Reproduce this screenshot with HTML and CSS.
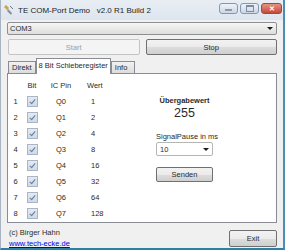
FILE: index.html
```html
<!DOCTYPE html>
<html lang="de">
<head>
    <meta charset="UTF-8">
    <title>TE COM-Port Demo</title>
    <link rel="stylesheet" href="styles.css">
</head>
<body>
<div class="window">
    <div class="titlebar">
        <svg class="app-icon" width="10" height="12" viewBox="0 0 10 12">
            <path d="M2 1 L5 4 L3 6 L0 3 Z" fill="#c9a24a"/>
            <path d="M4 5 L8 9 L7 11 L3 7 Z" fill="#8a8f99"/>
            <path d="M6 2 L9 5" stroke="#6f7785" stroke-width="1"/>
        </svg>
        <span class="title">TE COM-Port Demo   v2.0 R1 Build 2</span>
        <div class="controls">
            <span class="ctl ctl-min"><i></i></span>
            <span class="ctl ctl-max"><i></i></span>
            <span class="ctl ctl-close">&#x2715;</span>
        </div>
    </div>

    <div class="client">
        <div class="combo combo-port">
            <span>COM3</span>
            <span class="arrow"></span>
        </div>

        <div class="btn-row">
            <button class="btn" disabled>Start</button>
            <button class="btn">Stop</button>
        </div>

        <div class="tabs">
            <span class="tab">Direkt</span>
            <span class="tab active">8 Bit Schieberegister</span>
            <span class="tab tab-info">Info</span>
        </div>

        <div class="panel">
            <div class="bits">
                <span></span><span class="hd">Bit</span><span class="hd c">IC Pin</span><span class="hd w">Wert</span>

                <span class="n">1</span><span class="cb"></span><span class="c">Q0</span><span class="v">1</span>
                <span class="n">2</span><span class="cb"></span><span class="c">Q1</span><span class="v">2</span>
                <span class="n">3</span><span class="cb"></span><span class="c">Q2</span><span class="v">4</span>
                <span class="n">4</span><span class="cb"></span><span class="c">Q3</span><span class="v">8</span>
                <span class="n">5</span><span class="cb"></span><span class="c">Q4</span><span class="v">16</span>
                <span class="n">6</span><span class="cb"></span><span class="c">Q5</span><span class="v">32</span>
                <span class="n">7</span><span class="cb"></span><span class="c">Q6</span><span class="v">64</span>
                <span class="n">8</span><span class="cb"></span><span class="c">Q7</span><span class="v">128</span>
            </div>

            <div class="side">
                <div class="label-bold">Übergabewert</div>
                <div class="big">255</div>
                <div class="label">SignalPause in ms</div>
                <div class="combo combo-small">
                    <span>10</span>
                    <span class="arrow"></span>
                </div>
                <button class="btn btn-send">Senden</button>
            </div>
        </div>

        <div class="footer">
            <div class="credits">
                <div>(c) Birger Hahn</div>
                <a href="#">www.tech-ecke.de</a>
            </div>
            <button class="btn btn-exit">Exit</button>
        </div>
    </div>
</div>
</body>
</html>
```

FILE: styles.css
```css
body {
    margin: 0;
    padding: 0;
    font-family: "Liberation Sans", Arial, sans-serif;
    font-size: 7.5px;
    color: #2a2a2a;
}
.window {
    width: 285px;
    height: 250px;
    box-sizing: border-box;
    background-color: #f0f0f0;
    border-left: 1px solid #a9b4c2;
    border-right: 2px solid #4a8db5;
    border-bottom: 2px solid #2f7ea3;
    display: flex;
    flex-direction: column;
}
.titlebar {
    height: 20px;
    flex: none;
    display: flex;
    align-items: center;
    background: linear-gradient(#e9eef4, #dde5ee);
    padding-left: 3px;
}
.app-icon {
    margin-right: 4px;
}
.title {
    font-size: 8px;
    color: #1e1e1e;
    white-space: pre;
}
.controls {
    margin-left: auto;
    display: flex;
    gap: 2px;
    align-self: flex-start;
    margin-top: 3px;
    margin-right: 1px;
}
.ctl {
    width: 19px;
    height: 11px;
    box-sizing: border-box;
    border: 1px solid #8596b0;
    border-radius: 3px;
    background: linear-gradient(#eef3f9, #cbd7e6);
    display: flex;
    align-items: center;
    justify-content: center;
}
.ctl-min i {
    width: 7px;
    height: 2px;
    background: #8c9aae;
    margin-top: 3px;
}
.ctl-max i {
    width: 6px;
    height: 4px;
    border: 1px solid #7d8ca3;
    border-top-width: 2px;
}
.ctl-close {
    width: 21px;
    border-color: #9c4a40;
    background: linear-gradient(#e39384, #c6483a);
    color: #ffffff;
    font-size: 7px;
    font-weight: bold;
}
.client {
    flex: 1;
    display: flex;
    flex-direction: column;
    padding: 2px 6px 0 6px;
}
.combo {
    box-sizing: border-box;
    display: flex;
    align-items: center;
    justify-content: space-between;
    border: 1px solid #8e8f8f;
    border-radius: 2px;
    background: linear-gradient(#f6f6f6, #dedede);
    padding: 0 3px 0 2px;
}
.combo-port {
    height: 13px;
}
.arrow {
    width: 0;
    height: 0;
    border-left: 3px solid transparent;
    border-right: 3px solid transparent;
    border-top: 3px solid #1a1a1a;
}
.btn-row {
    display: flex;
    gap: 6px;
    margin-top: 4px;
    padding-left: 1px;
}
.btn {
    font-family: "Liberation Sans", Arial, sans-serif;
    font-size: 7.5px;
    color: #2a2a2a;
    height: 16px;
    padding: 0;
    border: 1px solid #707070;
    border-radius: 2px;
    background: linear-gradient(#f2f2f2 0%, #ebebeb 50%, #dddddd 51%, #cfcfcf 100%);
}
.btn-row .btn {
    flex: 1;
}
.btn:disabled {
    color: #a0a0a0;
    border-color: #c4c4c4;
    background: #f4f4f4;
}
.tabs {
    display: flex;
    align-items: flex-end;
    margin-top: 3px;
    height: 15px;
    padding-left: 1px;
    position: relative;
    z-index: 1;
}
.tab {
    height: 11px;
    line-height: 11px;
    padding: 0 3px;
    border: 1px solid #898c95;
    border-bottom: none;
    background: linear-gradient(#f2f2f2, #dcdcdc);
}
.tab.active {
    height: 15px;
    line-height: 13px;
    background: #ffffff;
    margin-bottom: -1px;
    padding: 0 2px;
}
.tab-info {
    padding: 0 7px 0 3px;
}
.panel {
    height: 150px;
    box-sizing: border-box;
    background: #ffffff;
    border: 1px solid #898c95;
    display: flex;
    padding-top: 3px;
}
.bits {
    display: grid;
    grid-template-columns: 15px 18px 40px 35px;
    grid-auto-rows: 16px;
    align-items: center;
}
.bits .n,
.bits .c,
.bits .hd {
    text-align: center;
}
.bits .hd.w {
    text-align: left;
    padding-left: 6px;
}
.bits .v {
    padding-left: 10px;
}
.cb {
    width: 9px;
    height: 9px;
    justify-self: center;
    border: 1px solid #aab6c8;
    background: linear-gradient(#e6eaf0, #d2d9e2);
    position: relative;
}
.cb::after {
    content: "";
    position: absolute;
    left: 3px;
    top: 1px;
    width: 2px;
    height: 5px;
    border-right: 1px solid #5a78ad;
    border-bottom: 1px solid #5a78ad;
    transform: rotate(40deg);
}
.side {
    margin-left: 40px;
    width: 57px;
    display: flex;
    flex-direction: column;
    padding-top: 19px;
    white-space: nowrap;
}
.label-bold {
    font-weight: bold;
    text-align: center;
}
.big {
    font-size: 12.5px;
    text-align: center;
    margin-top: 1px;
}
.label {
    margin-top: 12px;
}
.combo-small {
    height: 14px;
    margin-top: 1px;
    background: #ffffff;
    border-color: #b5b5b5;
    padding-left: 3px;
}
.btn-send {
    margin-top: 11px;
    height: 15px;
}
.footer {
    display: flex;
    justify-content: space-between;
    align-items: flex-start;
    padding-top: 4px;
}
.credits {
    padding-left: 2px;
    line-height: 11px;
}
.credits a {
    color: #0000e0;
}
.btn-exit {
    width: 48px;
    height: 17px;
    margin-top: 3px;
}
```
